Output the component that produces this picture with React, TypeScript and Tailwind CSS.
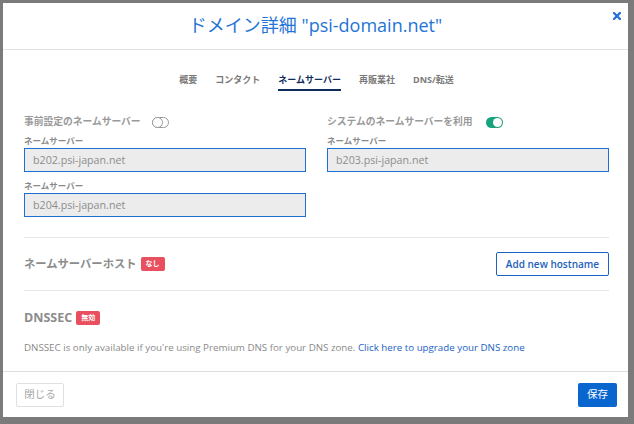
import React from "react";

const JP = { fontFamily: '"Open Sans", "Noto Sans CJK JP", sans-serif' };

function Toggle({ on }: { on: boolean }) {
  if (on) {
    return (
      <span className="relative inline-flex h-[11px] w-[17px] items-center rounded-full bg-[#17a37c]">
        <span className="absolute right-[1px] h-[9px] w-[9px] rounded-full bg-white" />
      </span>
    );
  }
  return (
    <span className="relative inline-flex h-[11px] w-[17px] items-center rounded-full border border-[#9a9a9a] bg-white">
      <span className="absolute left-[-1px] top-[-1px] h-[11px] w-[11px] rounded-full border border-[#9a9a9a] bg-white" />
    </span>
  );
}

function Field({ value }: { value: string }) {
  return (
    <div className="flex flex-col">
      <div className="h-[12px] text-[8.5px] font-bold leading-[12px] text-[#8a8a8a]">ネームサーバー</div>
      <div className="mt-[1px] flex h-[24px] items-center border border-[#1f6fd0] bg-[#ececec] pl-[8px] text-[10.7px] text-[#8c8c8c]">
        {value}
      </div>
    </div>
  );
}

function Badge({ children }: { children: React.ReactNode }) {
  return (
    <span className="ml-[4px] inline-flex h-[14px] items-center rounded-[2px] bg-[#e8505f] px-[5px] text-[7px] font-bold text-white">
      {children}
    </span>
  );
}

export default function App() {
  const tabs = ["概要", "コンタクト", "ネームサーバー", "再販業社", "DNS/転送"];
  return (
    <div className="h-[424px] w-[634px] overflow-hidden bg-[#7b7b7b] pl-[3px] pt-[3px]" style={JP}>
      <div className="relative flex h-[414px] w-[625px] flex-col bg-white">
        {/* header */}
        <div className="flex h-[47px] items-center justify-center border-b border-[#e3e3e3] pb-[2px]">
          <h1 className="text-[18px] font-normal text-[#1f74d6]">ドメイン詳細 "psi-domain.net"</h1>
        </div>
        <button className="absolute right-[6px] top-[8px] flex h-[10px] w-[10px] items-center justify-center">
          <svg width="8" height="8" viewBox="0 0 8 8">
            <path d="M1 1 L7 7 M7 1 L1 7" stroke="#1f6fd8" strokeWidth="2.2" strokeLinecap="square" />
          </svg>
        </button>

        {/* body */}
        <div className="flex flex-1 flex-col pl-[21px] pr-[19px]">
          <div className="mt-[23px] flex justify-center gap-[18px]">
            {tabs.map((t, i) => (
              <div
                key={t}
                className={
                  "h-[18px] text-[9px] font-bold leading-[14px] " +
                  (i === 2 ? "border-b-[2px] border-[#0e2c5c] text-[#0e2c5c]" : "text-[#7a7a7a]")
                }
              >
                {t}
              </div>
            ))}
          </div>

          <div className="mt-[24px] grid grid-cols-2 gap-x-[21px]">
            <div className="flex flex-col">
              <div className="flex h-[14px] items-center gap-[11px]">
                <span className="text-[9.75px] font-bold text-[#999]">事前設定のネームサーバー</span>
                <Toggle on={false} />
              </div>
              <div className="mt-[6px]">
                <Field value="b202.psi-japan.net" />
              </div>
              <div className="mt-[8px]">
                <Field value="b204.psi-japan.net" />
              </div>
            </div>
            <div className="flex flex-col">
              <div className="flex h-[14px] items-center gap-[13px]">
                <span className="text-[9.75px] font-bold text-[#999]">システムのネームサーバーを利用</span>
                <Toggle on={true} />
              </div>
              <div className="mt-[6px]">
                <Field value="b203.psi-japan.net" />
              </div>
            </div>
          </div>

          <div className="mt-[20px] border-t border-[#e6e6e6]" />

          <div className="flex h-[52px] items-center justify-between">
            <div className="flex items-center">
              <span className="text-[11.3px] font-bold text-[#8c8c8c]">ネームサーバーホスト</span>
              <Badge>なし</Badge>
            </div>
            <button className="flex h-[24px] w-[113px] items-center justify-center rounded-[2px] border border-[#1c64c4] text-[10px] font-semibold text-[#1c5fba]">
              Add new hostname
            </button>
          </div>

          <div className="border-t border-[#e6e6e6]" />

          <div className="mt-[18px] flex items-center">
            <span className="text-[12.5px] font-bold text-[#8c8c8c]">DNSSEC</span>
            <Badge>無効</Badge>
          </div>

          <div className="mt-[13px] text-[9.75px] text-[#8a8a8a]">
            DNSSEC is only available if you're using Premium DNS for your DNS zone.{" "}
            <span className="text-[#1b62c4]">Click here to upgrade your DNS zone</span>
          </div>
        </div>

        {/* footer */}
        <div className="flex h-[46px] items-start justify-between border-t border-[#dedede] pl-[13px] pr-[11px] pt-[11px]">
          <button className="flex h-[24px] w-[48px] items-center justify-center rounded-[2px] border border-[#e0e0e0] text-[10.5px] text-[#a8a8a8]">
            閉じる
          </button>
          <button className="flex h-[24px] w-[39px] items-center justify-center rounded-[2px] bg-[#0a66cf] text-[10.5px] text-white">
            保存
          </button>
        </div>
      </div>
    </div>
  );
}
